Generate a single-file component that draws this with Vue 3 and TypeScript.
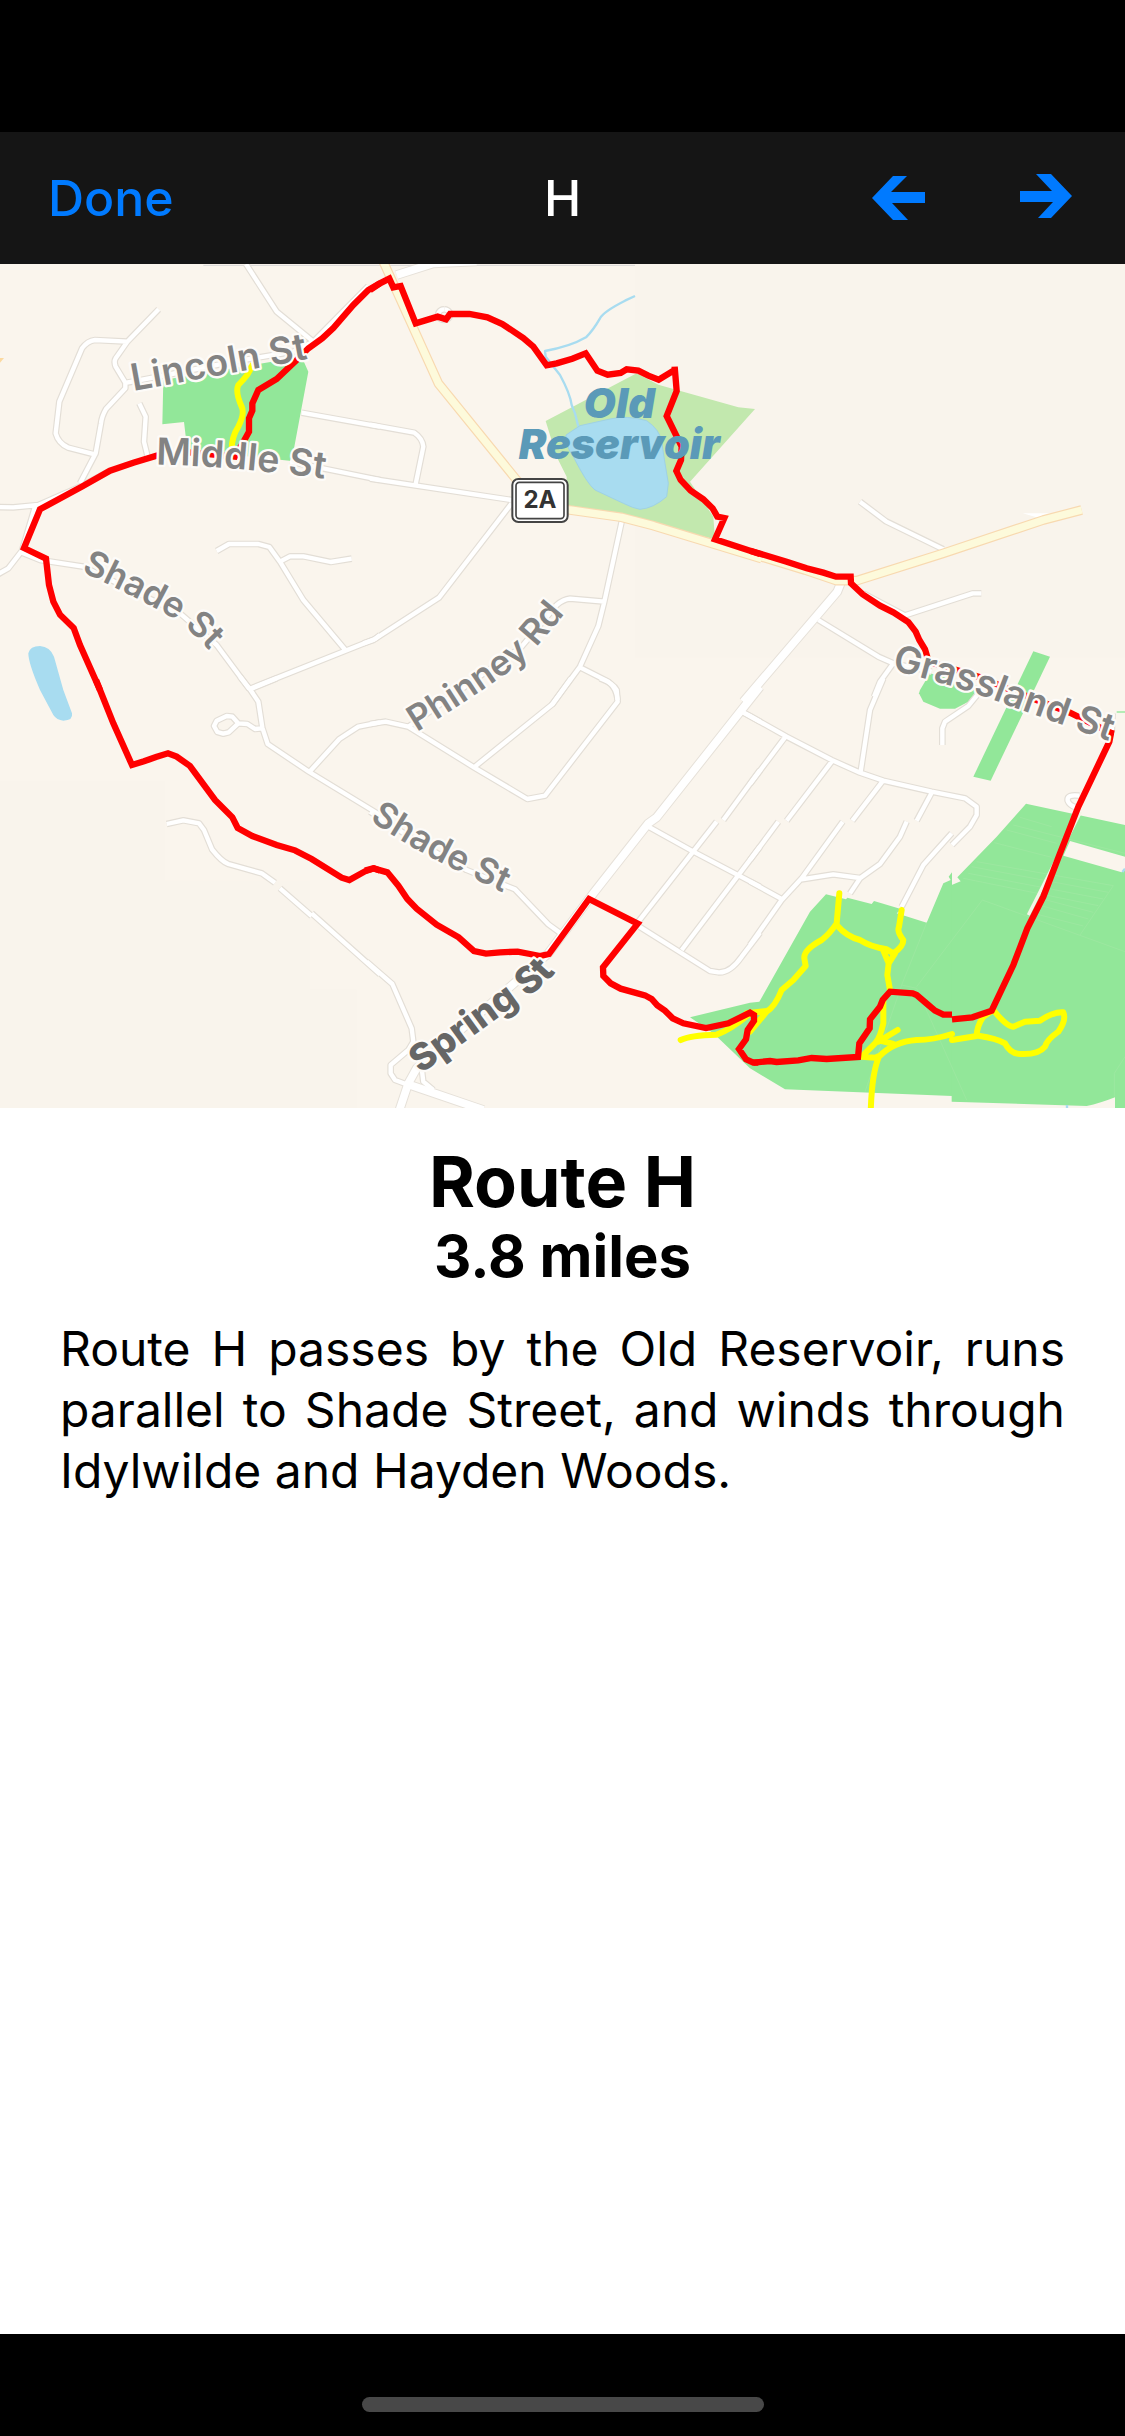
<script setup lang="ts">
interface Section {
  x: number
  y: number
  roads: string
  main?: string
  highway?: string
  trails?: string
  route: string
}

interface Label {
  id: string
  text: string
  path: string
  kind: string
}

const sections: Section[] = [
  {
    x: 0,
    y: -12,
    roads:
      'M738,12 L830,155 940,245 1105,78 M380,368 L500,345 700,305 880,275 940,245 M476,148 L382,245 347,295 Q341,305 347,320 L376,368 376,385 318,447 Q305,470 303,490 L287,580 240,670 M382,245 L285,240 Q262,243 246,265 L178,425 167,520 Q175,550 205,563 L287,584 M418,430 L437,470 432,545 443,590 M-20,741 L40,742 115,735 245,678 330,632 M105,740 L66,872 25,925 -10,945 M66,878 L120,900 250,920 540,1060 650,1155 748,1287 M905,458 L1140,500 M870,605 L1140,660 M650,873 L687,852 775,852 808,861 840,905 910,1020 1036,1170 M840,905 L870,889 910,889 992,906 1055,896 M748,1287 L1125,1137 1140,1125',
    trails: 'M757,315 Q750,340 715,375 Q705,395 725,440 Q735,460 715,500 Q695,530 695,570',
    route:
      'M300,1290 L240,1155 221,1104 180,1064 160,1025 147,975 138,896 72,864 120,748 245,680 330,632 400,608 470,587 570,577 705,590 725,555 747,515 747,475 757,452 757,430 775,390 830,357 890,300 925,265 967,235 1000,204 1060,135 1105,90 1140,70',
  },
  {
    x: 1110,
    y: -12,
    roads:
      'M0,494 L133,518 Q158,535 160,560 L137,672 M0,656 L425,720 M425,730 L207,1013 10,1140 -20,1150 M755,785 L703,1025 685,1098 630,1220 545,1335 M703,1025 L600,1016 Q580,1018 560,1035 L455,1160 115,1400 M630,1222 L715,1265 Q740,1285 743,1320 M222,148 a18,16 0 1 0 1,0',
    main: 'M80,45 L190,10 320,4',
    highway: 'M40,5 L205,370 440,660 510,735 600,750 755,772 850,797 1175,896',
    route:
      'M0,90 L30,70 58,56 70,82 92,78 137,190 203,170 228,178 240,162 298,162 352,172 397,192 460,234 490,260 530,316 560,310 607,296 647,280 682,332 713,344 752,339 770,328 805,332 835,347 866,359 914,330 914,320 920,393 890,468 935,560 933,600 919,633 932,660 962,692 1000,718 1028,745 1042,770 1063,774 1035,838 1170,882',
  },
  {
    x: 2250,
    y: -12,
    roads:
      'M330,725 L408,784 580,868 M340,1000 L465,1066 668,1000 694,1000 M205,1080 L385,1190 430,1210 545,1235 M430,1210 L390,1265 372,1310',
    main: 'M272,970 L262,995 -20,1325',
    highway: 'M0,880 L165,930 260,962 320,962 580,880 880,780 995,750',
    route:
      'M0,872 L110,905 170,925 220,938 258,950 302,950 303,970 338,1003 390,1037 430,1057 475,1086 497,1115 508,1140 525,1168 536,1205 620,1230 700,1255 770,1285 860,1320 960,1358 1085,1420',
  },
  {
    x: 0,
    y: 1248,
    roads:
      'M720,-10 L750,28 775,65 787,143 803,192 928,276 1140,405 M750,28 L830,-5 M785,145 L765,147 742,132 715,130 697,110 680,108 650,122 642,138 652,156 670,161 686,157 715,130 M928,276 L1018,177 1075,140 1140,127 M500,432 L550,421 597,430 612,450 636,508 Q665,545 685,552 L785,580 825,608 M840,625 L935,708 M935,700 L1140,883',
    route:
      'M1140,572 L1122,565 1095,574 1048,600 1025,593 935,537 885,511 830,495 757,468 713,444 697,412 645,360 570,258 530,230 504,220 468,231 432,244 396,255 340,130 288,0',
  },
  {
    x: 1110,
    y: 1248,
    roads:
      'M0,132 L47,125 115,140 312,262 472,357 525,347 743,65 740,30 Q730,10 690,-5 M312,262 L548,72 603,-5 M0,395 L150,490 290,570 435,628 535,733 575,762 M-10,845 L67,912 125,1045 130,1085 115,1110 62,1155 62,1180 75,1200 115,1215 M155,1165 L160,1205 190,1230 M1115,95 L1170,125 M1170,270 L1060,420 M1040,425 L805,725 M1170,500 L935,810 M1170,758 L1115,830 Q1080,880 1045,877 L1020,873 808,740 M835,440 L970,515 1170,620',
    main: 'M1170,20 L860,412 835,430 670,640 535,820 140,1165 115,1210 85,1300 M115,1213 L340,1290',
    route:
      'M1165,1148 L1150,1148 1128,1138 1107,1107 1128,1078 1133,1050 1152,1022 1152,1005 1140,998 1075,1030 1008,1044 940,1030 908,1015 885,992 862,976 845,957 825,946 752,926 722,910 700,888 699,862 803,731 657,657 537,822 510,828 480,822 443,815 390,817 348,821 312,813 266,772 200,734 140,686 112,657 85,617 52,577 10,565 -15,572',
  },
  {
    x: 2250,
    y: 1248,
    roads:
      'M-25,95 L0,108 110,170 245,240 330,278 400,302 545,335 645,355 680,380 680,405 660,440 606,495 M400,-5 L360,90 332,275 M105,172 L0,312 M245,245 L110,422 M85,425 L0,540 M397,305 L307,422 M278,425 L155,595 95,660 0,795 M0,605 L97,658 M545,338 L500,422 M470,425 L450,470 390,552 330,595 300,640 M155,598 L250,583 330,594 M605,460 L520,555 455,680 M577,195 L577,145 585,125 655,78 690,35 M988,347 Q950,342 953,362 Q958,376 978,382 M1088,100 L1085,160',
    trails:
      'M268,640 L260,730 Q240,760 215,780 Q160,810 163,835 L167,858 130,900 95,930 Q75,980 50,995 L0,1055 M260,735 Q290,770 330,780 Q360,800 410,808 L430,820 Q460,800 460,780 Q440,755 447,740 L455,690 M400,812 L416,850 M435,820 L416,850 412,885 420,930 M-10,1000 L50,993 M-208,1080 Q-180,1066 -100,1064 Q-60,1050 -5,1005 M400,960 L400,1030 Q390,1075 375,1090 L335,1130 375,1133 387,1128 M362,1300 Q365,1180 387,1130 Q430,1085 500,1080 Q550,1080 606,1062 M385,1085 L443,1050 M385,1080 L430,1092 M606,1080 L680,1068 Q680,1040 700,1010 L730,990 Q770,1040 790,1040 L825,1025 870,1022 Q910,995 940,997 Q950,1020 925,1055 Q890,1080 885,1100 Q865,1125 810,1122 Q780,1120 765,1090 Q740,1075 685,1067',
    route:
      'M1065,155 L1092,161 M1083,160 L1078,185 985,380 930,520 880,650 832,745 790,855 725,992 667,1012 606,1018 M606,1004 L580,1004 555,992 535,975 500,945 488,940 420,935 398,960 390,980 360,1018 359,1045 328,1090 324,1131 230,1137 185,1134 145,1141 80,1146 60,1143 10,1148',
  },
]

const labels: Label[] = [
  { id: 'lincoln', text: 'Lincoln St', path: 'M400,381 L1060,260', kind: 'street large' },
  { id: 'middle', text: 'Middle St', path: 'M468,602 Q720,605 1080,660', kind: 'street large' },
  { id: 'shade-west', text: 'Shade St', path: 'M243,922 Q460,1025 530,1070 Q580,1100 700,1240', kind: 'street' },
  { id: 'phinney', text: 'Phinney Rd', path: 'M1250,1405 Q1500,1250 1580,1180 Q1640,1120 1760,965', kind: 'street' },
  { id: 'shade-south', text: 'Shade St', path: 'M1108,1668 Q1250,1765 1400,1833 L1640,1950', kind: 'street' },
  { id: 'grassland', text: 'Grassland St', path: 'M2674,1217 Q2900,1275 3000,1315 Q3150,1370 3450,1475', kind: 'street large' },
  { id: 'spring', text: 'Spring St', path: 'M1262,2430 L1635,2160 1780,2000', kind: 'street large avenue' },
]
</script>

<template>
  <div class="screen">
    <header class="top">
      <nav class="bar">
        <div class="side">
          <button class="done" type="button">Done</button>
        </div>
        <h1 class="title">H</h1>
        <div class="side arrows">
          <button class="arrow" type="button" aria-label="Previous route">
            <svg viewBox="0 0 54 48"><path d="M1,24 L22,2 H36 L20,18 H54 V29 H21 L37,46 H22Z" /></svg>
          </button>
          <button class="arrow" type="button" aria-label="Next route">
            <svg viewBox="0 0 54 48"><path d="M53,22 L32,44 H19 L34,28 H1 V17 H33 L17,0 H32Z" /></svg>
          </button>
        </div>
      </nav>
    </header>

    <main class="content">
      <svg class="map" viewBox="0 0 3375 2532" role="img" aria-label="Map of Route H">
        <rect class="land" width="3375" height="2532" />
        <path class="shade" d="M0,1552 H495 V1850 H930 V2176 H1070 V2532 H0Z M1905,0 H3375 V1180 H1905Z" />
        <path class="edge" d="M610,4 H1905" />

        <g transform="translate(0 -12)">
          <path class="park" d="M490,360 L905,290 925,335 875,603 562,570 552,486 487,493Z" />
          <path class="water" d="M85,1180 Q90,1158 120,1158 Q150,1160 162,1190 L190,1290 216,1360 Q220,1382 190,1382 Q170,1380 160,1365 L120,1290 Q85,1210 85,1180Z" />
          <path class="amber" d="M0,294 H12 L0,308Z" />
        </g>
        <g transform="translate(1110 -12)">
          <path class="reserve" d="M527,483 L800,340 865,374 1105,442 1155,447 960,665 1030,770 1035,838 850,795 590,745 590,650 560,590Z" />
          <path class="stream" d="M795,108 L765,122 Q700,155 690,175 Q670,210 648,232 Q600,260 525,273 L527,290 570,345 Q600,400 605,435 L615,460 625,500" />
          <path class="water lake" d="M588,525 L630,497 720,477 Q770,465 830,482 Q870,510 875,545 L885,610 895,670 890,710 Q850,745 810,748 Q790,745 760,730 L675,690 Q650,670 610,590 Q585,555 588,525Z" />
        </g>
        <g transform="translate(2250 -12)">
          <path class="park" d="M540,1240 L510,1290 507,1300 520,1325 570,1346 615,1346 655,1325 690,1280Z" />
          <path class="park" d="M850,1174 L900,1190 722,1562 670,1550Z" />
          <path class="spur" d="M818,760 H905 L870,775Z" />
        </g>
        <g transform="translate(2250 1248)">
          <path class="park" d="M228,643 L288,658 292,653 365,672 372,663 455,688 440,700 530,728 580,610 602,600 596,590 606,577 V1248 L105,1228 0,1165 -110,1060 -180,1012 0,968 28,965 180,695Z" />
          <path class="park" d="M605,615 L632,604 622,592 740,470 828,371 1125,435 V530 L960,483 940,527 1115,577 1125,570 V1284 H1095 V1252 Q1050,1270 1010,1278 L605,1265Z" />
          <path class="field" d="M810,412 L905,440 M790,435 L1125,520 M770,450 L920,490 M733,488 L905,532 M680,545 L1090,617 M665,560 L1075,637 M655,580 L1060,657 M640,595 L1045,677 M870,655 L1030,697 M860,673 L1015,717 M850,700 L1000,738 M1090,617 L990,765 M500,920 L697,660 1125,815 M345,1235 L455,915 500,925 650,1260 M455,915 L530,728 M1125,1130 L1093,1180 V1250" />
          <path class="lane" d="M992,395 L835,705" />
          <path class="stream" d="M1125,566 L1117,576 M951,1275 V1284" />
          <path class="park" d="M1100,94 H1125 V98 H1100Z" />
        </g>

        <g v-for="(s, i) in sections" :key="'c' + i" :transform="`translate(${s.x} ${s.y})`">
          <path class="road-casing" :d="s.roads" />
          <path v-if="s.main" class="main-casing" :d="s.main" />
        </g>
        <g v-for="(s, i) in sections" :key="'r' + i" :transform="`translate(${s.x} ${s.y})`">
          <path class="road" :d="s.roads" />
          <path v-if="s.main" class="main" :d="s.main" />
        </g>
        <g v-for="(s, i) in sections" :key="'hc' + i" :transform="`translate(${s.x} ${s.y})`">
          <path v-if="s.highway" class="highway-casing" :d="s.highway" />
        </g>
        <g v-for="(s, i) in sections" :key="'h' + i" :transform="`translate(${s.x} ${s.y})`">
          <path v-if="s.highway" class="highway" :d="s.highway" />
        </g>
        <g v-for="(s, i) in sections" :key="'t' + i" :transform="`translate(${s.x} ${s.y})`">
          <path v-if="s.trails" class="trail" :d="s.trails" />
        </g>
        <g v-for="(s, i) in sections" :key="'p' + i" :transform="`translate(${s.x} ${s.y})`">
          <path class="route" :d="s.route" />
        </g>
        <text class="place" text-anchor="middle">
          <tspan x="1858" y="463">Old</tspan>
          <tspan x="1858" y="584">Reservoir</tspan>
        </text>

        <g class="shield">
          <rect class="shield-outer" x="1537" y="645" width="166" height="129" rx="18" />
          <rect class="shield-inner" x="1548" y="655" width="144" height="109" rx="10" />
          <text x="1620" y="733" text-anchor="middle">2A</text>
        </g>

        <g v-for="l in labels" :key="l.id">
          <path :id="l.id" :d="l.path" fill="none" />
          <text :class="l.kind"><textPath :href="'#' + l.id">{{ l.text }}</textPath></text>
        </g>
      </svg>

      <section class="details">
        <h2 class="name">Route H</h2>
        <h3 class="distance">3.8 miles</h3>
        <p class="about">
          Route H passes by the Old Reservoir, runs parallel to Shade Street, and winds through Idylwilde and Hayden
          Woods.
        </p>
      </section>
    </main>

    <footer class="bottom">
      <div class="home"></div>
    </footer>
  </div>
</template>

<style>
body {
  margin: 0;
  background: #000;
}
</style>

<style scoped>
.screen {
  display: flex;
  flex-direction: column;
  min-height: 100vh;
  font-family: Inter, 'Liberation Sans', sans-serif;
  background: #000;
}
.top {
  padding-top: 132px;
}
.bar {
  display: grid;
  grid-template-columns: 1fr auto 1fr;
  align-items: center;
  height: 132px;
  padding: 0 48px;
  background: #151515;
}
.side {
  display: flex;
  align-items: center;
}
.arrows {
  justify-content: flex-end;
  gap: 94px;
  padding-right: 4px;
}
button {
  margin: 0;
  padding: 0;
  border: 0;
  background: none;
  font: inherit;
  color: #007aff;
  cursor: pointer;
}
.done {
  font-size: 50px;
  font-weight: 500;
}
.arrow {
  display: flex;
}
.arrow svg {
  width: 54px;
  height: 48px;
  fill: #007aff;
}
.title {
  margin: 0;
  font-size: 50px;
  font-weight: 500;
  color: #fff;
}
.content {
  flex: 1;
  background: #fff;
}
.map {
  display: block;
  width: 100%;
  height: auto;
}
.map path {
  stroke-linejoin: round;
}
.land {
  fill: #faf5ed;
}
.shade {
  fill: #f9f4ec;
}
.edge {
  fill: none;
  stroke: #d8d6d6;
  stroke-width: 3;
}
.park {
  fill: #92e799;
}
.reserve {
  fill: #c2e8ae;
}
.water {
  fill: #a8dcf0;
}
.lake {
  stroke: #9fd2e4;
  stroke-width: 3;
}
.amber {
  fill: #fbd9a0;
}
.spur {
  fill: #fff;
}
.stream {
  fill: none;
  stroke: #a8dcf0;
  stroke-width: 7;
}
.field {
  fill: none;
  stroke: #9ce8a0;
  stroke-width: 3;
}
.lane {
  fill: none;
  stroke: #f4f5e8;
  stroke-width: 10;
}
.road-casing {
  fill: none;
  stroke: #e3ded6;
  stroke-width: 20;
}
.road {
  fill: none;
  stroke: #fff;
  stroke-width: 13;
}
.main-casing {
  fill: none;
  stroke: #e6e1d9;
  stroke-width: 29;
}
.main {
  fill: none;
  stroke: #fff;
  stroke-width: 23;
}
.highway-casing {
  fill: none;
  stroke: #f8d9b0;
  stroke-width: 29;
}
.highway {
  fill: none;
  stroke: #fdfadb;
  stroke-width: 22;
}
.trail {
  fill: none;
  stroke: #ff0;
  stroke-width: 18;
  stroke-linecap: round;
}
.map .route {
  fill: none;
  stroke: #f00;
  stroke-width: 19;
  stroke-linejoin: miter;
}
.place {
  font-size: 124px;
  font-weight: 900;
  font-style: italic;
  fill: #5b9ab8;
}
.shield-outer {
  fill: #fff;
  stroke: #444;
  stroke-width: 6;
}
.shield-inner {
  fill: #fff;
  stroke: #444;
  stroke-width: 5;
}
.shield text {
  font-size: 72px;
  font-weight: 700;
  fill: #333;
}
.street {
  font-size: 106px;
  font-weight: 600;
  fill: #838383;
  stroke: #fdfbf8;
  stroke-width: 14;
  stroke-linejoin: round;
  paint-order: stroke;
}
.large {
  font-size: 112px;
}
.avenue {
  font-weight: 800;
  fill: #666;
}
.details {
  padding: 30px 60px;
  color: #000;
}
.name {
  margin: 0;
  font-size: 70px;
  line-height: 88px;
  font-weight: 700;
  text-align: center;
}
.distance {
  margin: 0;
  font-size: 58px;
  line-height: 60px;
  font-weight: 700;
  text-align: center;
}
.about {
  margin: 32px 0 0;
  font-size: 48px;
  line-height: 61px;
  text-align: justify;
}
.bottom {
  display: flex;
  justify-content: center;
  align-items: flex-end;
  height: 102px;
  padding-bottom: 24px;
  box-sizing: border-box;
}
.home {
  width: 402px;
  height: 15px;
  border-radius: 8px;
  background: #484848;
}
</style>
